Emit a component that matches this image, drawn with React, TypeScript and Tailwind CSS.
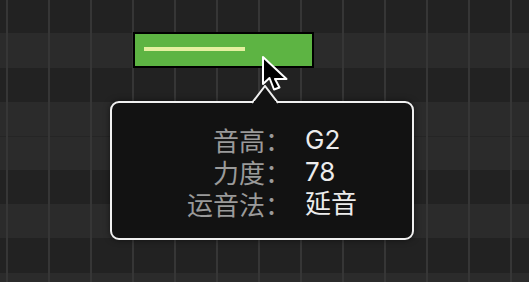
import React from 'react'

const rows = [
  { h: 'h-[33px]', tone: 'bg-[#222222]' },
  { h: 'h-[35px]', tone: 'bg-[#2b2b2b]' },
  { h: 'h-[34px]', tone: 'bg-[#222222]' },
  { h: 'h-[34px]', tone: 'bg-[#2b2b2b]' },
  { h: 'h-[34px]', tone: 'bg-[#2b2b2b] border-t border-[#252525]' },
  { h: 'h-[34px]', tone: 'bg-[#222222]' },
  { h: 'h-[34px]', tone: 'bg-[#2b2b2b]' },
  { h: 'h-[35px]', tone: 'bg-[#222222]' },
  { h: 'flex-1', tone: 'bg-[#2b2b2b]' },
]

const info = [
  { label: '音高：', value: 'G2' },
  { label: '力度：', value: '78' },
  { label: '运音法：', value: '延音' },
]

function Cursor() {
  return (
    <svg className="absolute left-[261px] top-[55px]" width="34" height="44" viewBox="0 0 34 44">
      <path
        d="M2 2 V29 L8.5 23 L13 34.5 L18.5 32.5 L14 24 H25.5 Z"
        fill="#000"
        stroke="#fff"
        strokeWidth="2"
        strokeLinejoin="round"
      />
    </svg>
  )
}

export default function App() {
  return (
    <div className="relative w-[529px] h-[282px] overflow-hidden bg-[#222222]" style={{ fontFamily: '"Noto Sans CJK SC", sans-serif' }}>
      {/* piano roll rows */}
      <div className="flex flex-col h-full">
        {rows.map((r, i) => (
          <div key={i} className={`${r.h} ${r.tone}`} />
        ))}
      </div>

      {/* beat lines */}
      <div className="absolute inset-0 flex pl-[6px]">
        {Array.from({ length: 13 }).map((_, i) => (
          <div key={i} className="w-[42px] h-full shrink-0 border-l-2 border-[#363636]" />
        ))}
      </div>

      {/* note */}
      <div className="absolute left-[133px] top-[32px] w-[181px] h-[36px] border-2 border-black bg-[#5db443] pl-[9px] pt-[13px]">
        <div className="w-[101px] h-[4px] bg-[#e4f0a0]" />
      </div>

      {/* tooltip */}
      <div className="absolute left-[110px] top-[101px] w-[304px] h-[139px] rounded-[9px] border-2 border-[#f0f0f0] bg-[#121212] shadow-[0_0_6px_rgba(0,0,0,0.5)] pl-[75px] pt-[21px]">
        <svg className="absolute left-[140px] top-[-18px]" width="26" height="20" viewBox="0 0 26 20">
          <path d="M0 18 L13 1 L26 18" fill="#121212" stroke="#f0f0f0" strokeWidth="2" />
          <rect x="2" y="16" width="22" height="4" fill="#121212" />
        </svg>
        {info.map((row) => (
          <div key={row.label} className="flex items-center h-[32px] text-[26px] leading-[32px]">
            <span className="w-[104px] text-right text-[#9a9a9a]">{row.label}</span>
            <span className="ml-[14px] text-[#ececec]" style={{ fontFamily: 'Inter, "Noto Sans CJK SC", sans-serif' }}>
              {row.value}
            </span>
          </div>
        ))}
      </div>

      <Cursor />
    </div>
  )
}
